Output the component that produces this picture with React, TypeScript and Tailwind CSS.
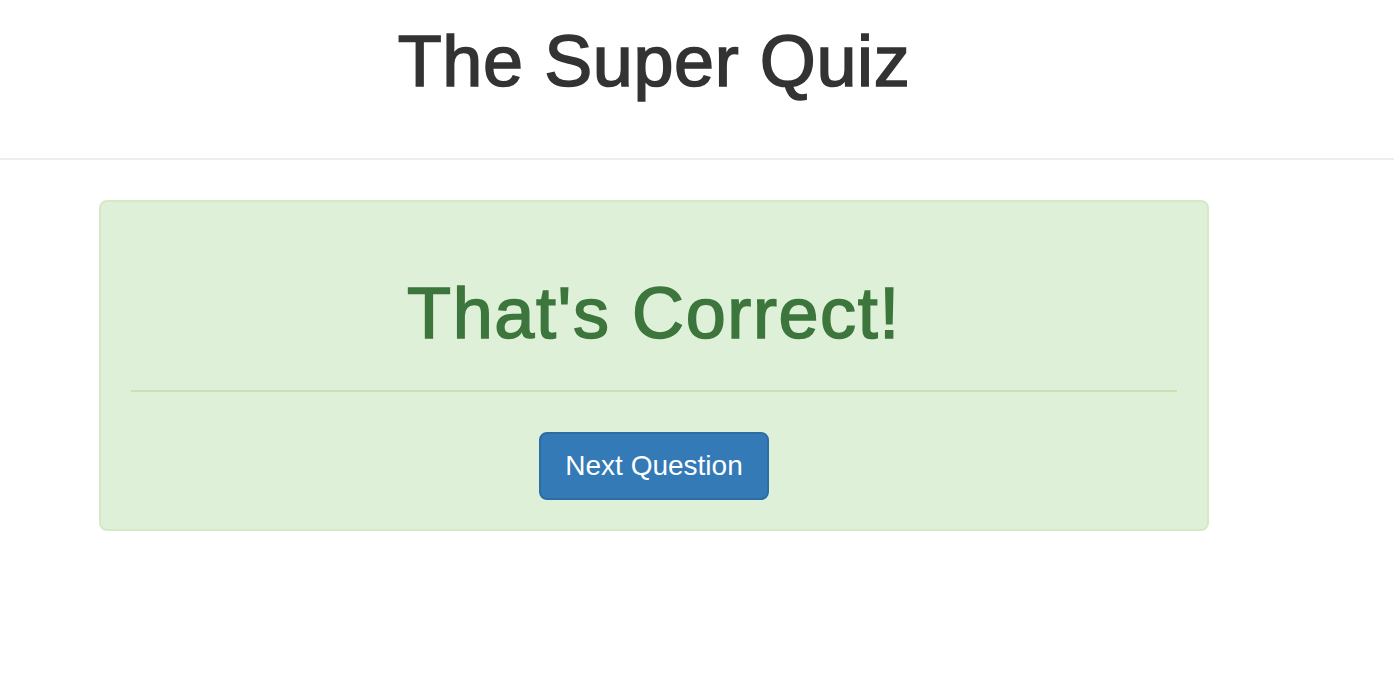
export default function App() {
  return (
    <div className="min-h-screen bg-white font-['Liberation_Sans',Arial,sans-serif] text-[#333]">
      <header className="border-b-2 border-[#eee] pt-[22px] pb-[57px]">
        <div className="ml-[99px] w-[1110px] text-center">
          <h1 className="text-[72px] leading-[79px] font-normal tracking-[0.6px] [-webkit-text-stroke:1.6px_#333]">
            The Super Quiz
          </h1>
        </div>
      </header>

      <div className="ml-[99px] mt-10 w-[1110px] rounded-lg border-2 border-[#d6e9c6] bg-[#dff0d8] px-[30px] pt-[72px] pb-[29px] text-center text-[#3c763d]">
        <h1 className="text-[72px] leading-[79px] font-normal tracking-[1.6px] [-webkit-text-stroke:1.6px_#3c763d]">
          That's Correct!
        </h1>
        <hr className="mt-[37px] mb-10 border-t-2 border-[#c9e2b3]" />
        <button className="h-[68px] rounded-lg border-2 border-[#2e6da4] bg-[#337ab7] px-6 text-[28px] leading-10 text-white">
          Next Question
        </button>
      </div>
    </div>
  );
}
